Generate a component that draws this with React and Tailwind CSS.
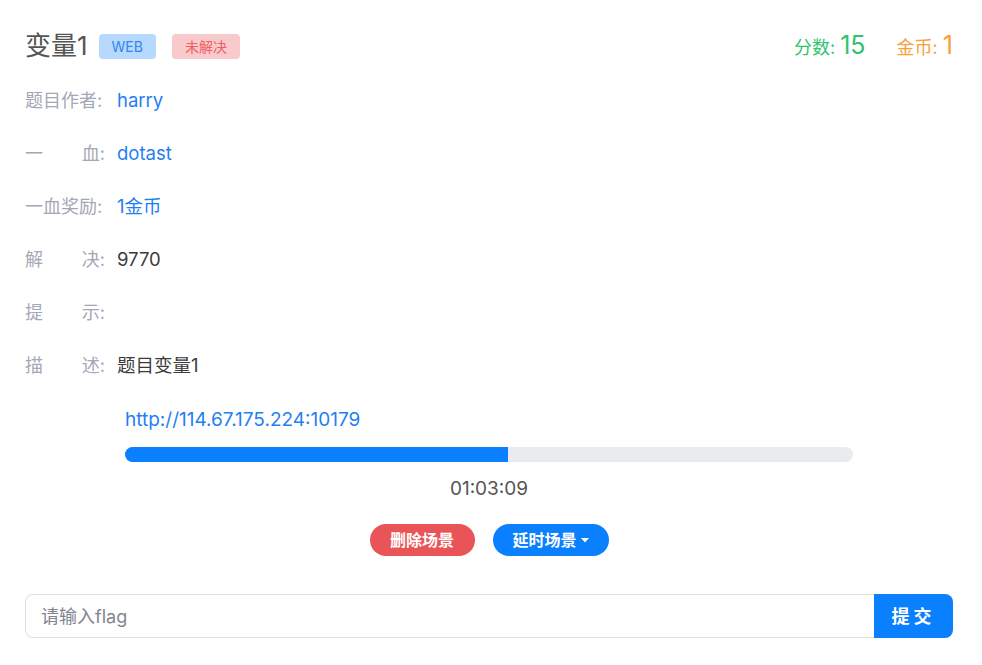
export default function App() {
  const rows = [
    { label: ['题目作者:'], value: 'harry', tone: 'link' },
    { label: ['一', '血:'], value: 'dotast', tone: 'link' },
    { label: ['一血奖励:'], value: '1金币', tone: 'link' },
    { label: ['解', '决:'], value: '9770', tone: 'text' },
    { label: ['提', '示:'], value: '', tone: 'text' },
    { label: ['描', '述:'], value: '题目变量1', tone: 'text' },
  ];

  return (
    <div
      className="min-h-screen bg-white pl-[25px] pr-[29px] pt-[30px]"
      style={{ fontFamily: 'Inter, "Noto Sans CJK SC", sans-serif' }}
    >
      {/* header */}
      <div className="flex h-[32px] items-center justify-between">
        <div className="flex items-center">
          <h2 className="text-[26px] leading-none text-[#555]">变量1</h2>
          <span className="ml-[11px] flex h-[25px] items-center rounded-[4px] bg-[#b6d9fd] px-[13px] text-[14px] text-[#2f86f0]">
            WEB
          </span>
          <span className="ml-[16px] flex h-[25px] items-center rounded-[4px] bg-[#f9cacb] px-[13px] text-[14px] text-[#ee5f63]">
            未解决
          </span>
        </div>
        <div className="flex items-baseline gap-[31px]">
          <div className="text-[#2fc36f]">
            <span className="text-[18px]">分数: </span>
            <span className="text-[25px]">15</span>
          </div>
          <div className="text-[#f6a03f]">
            <span className="text-[18px]">金币: </span>
            <span className="text-[25px]">1</span>
          </div>
        </div>
      </div>

      {/* info rows */}
      <div className="mt-[12px]">
        {rows.map((row) => (
          <div key={row.value + row.label.join('')} className="flex h-[53px] items-center text-[18px]">
            <div className="flex w-[80px] justify-between text-[#a3a8b6]">
              {row.label.map((l) => (
                <span key={l}>{l}</span>
              ))}
            </div>
            <span className={`ml-[12px] text-[18.5px] ${row.tone === 'link' ? 'text-[#1f80f2]' : 'text-[#3b3b3b]'}`}>
              {row.value}
            </span>
          </div>
        ))}
      </div>

      {/* scene */}
      <div className="mx-[100px] mt-[14px]">
        <a className="block text-[19px] leading-[28px] text-[#1f80f2]">http://114.67.175.224:10179</a>
        <div className="mt-[13px] h-[15px] overflow-hidden rounded-full bg-[#e9ebef]">
          <div className="h-full bg-[#0a80ff]" style={{ width: '52.6%' }} />
        </div>
        <div className="mt-[14px] text-center text-[19px] leading-[26px] text-[#555]">01:03:09</div>
      </div>

      <div className="mt-[22px] flex justify-center gap-[18px]">
        <button className="h-[32px] w-[105px] rounded-full bg-[#e85457] text-[16px] font-bold text-white">
          删除场景
        </button>
        <button className="flex h-[32px] w-[116px] items-center justify-center gap-[4px] rounded-full bg-[#0a80ff] text-[16px] font-bold text-white">
          延时场景
          <svg width="8" height="5" viewBox="0 0 8 5">
            <path d="M0 0h8L4 4.5z" fill="white" />
          </svg>
        </button>
      </div>

      {/* flag form */}
      <div className="mt-[38px] flex h-[44px]">
        <input
          className="h-full flex-1 rounded-l-[8px] border border-r-0 border-[#dedfe3] px-[15px] text-[18px] text-[#333] outline-none placeholder:text-[#7f8590]"
          placeholder="请输入flag"
        />
        <button className="h-full w-[79px] rounded-r-[8px] bg-[#0a80ff] text-[18px] font-bold tracking-[4px] text-white">
          提交
        </button>
      </div>
    </div>
  );
}
